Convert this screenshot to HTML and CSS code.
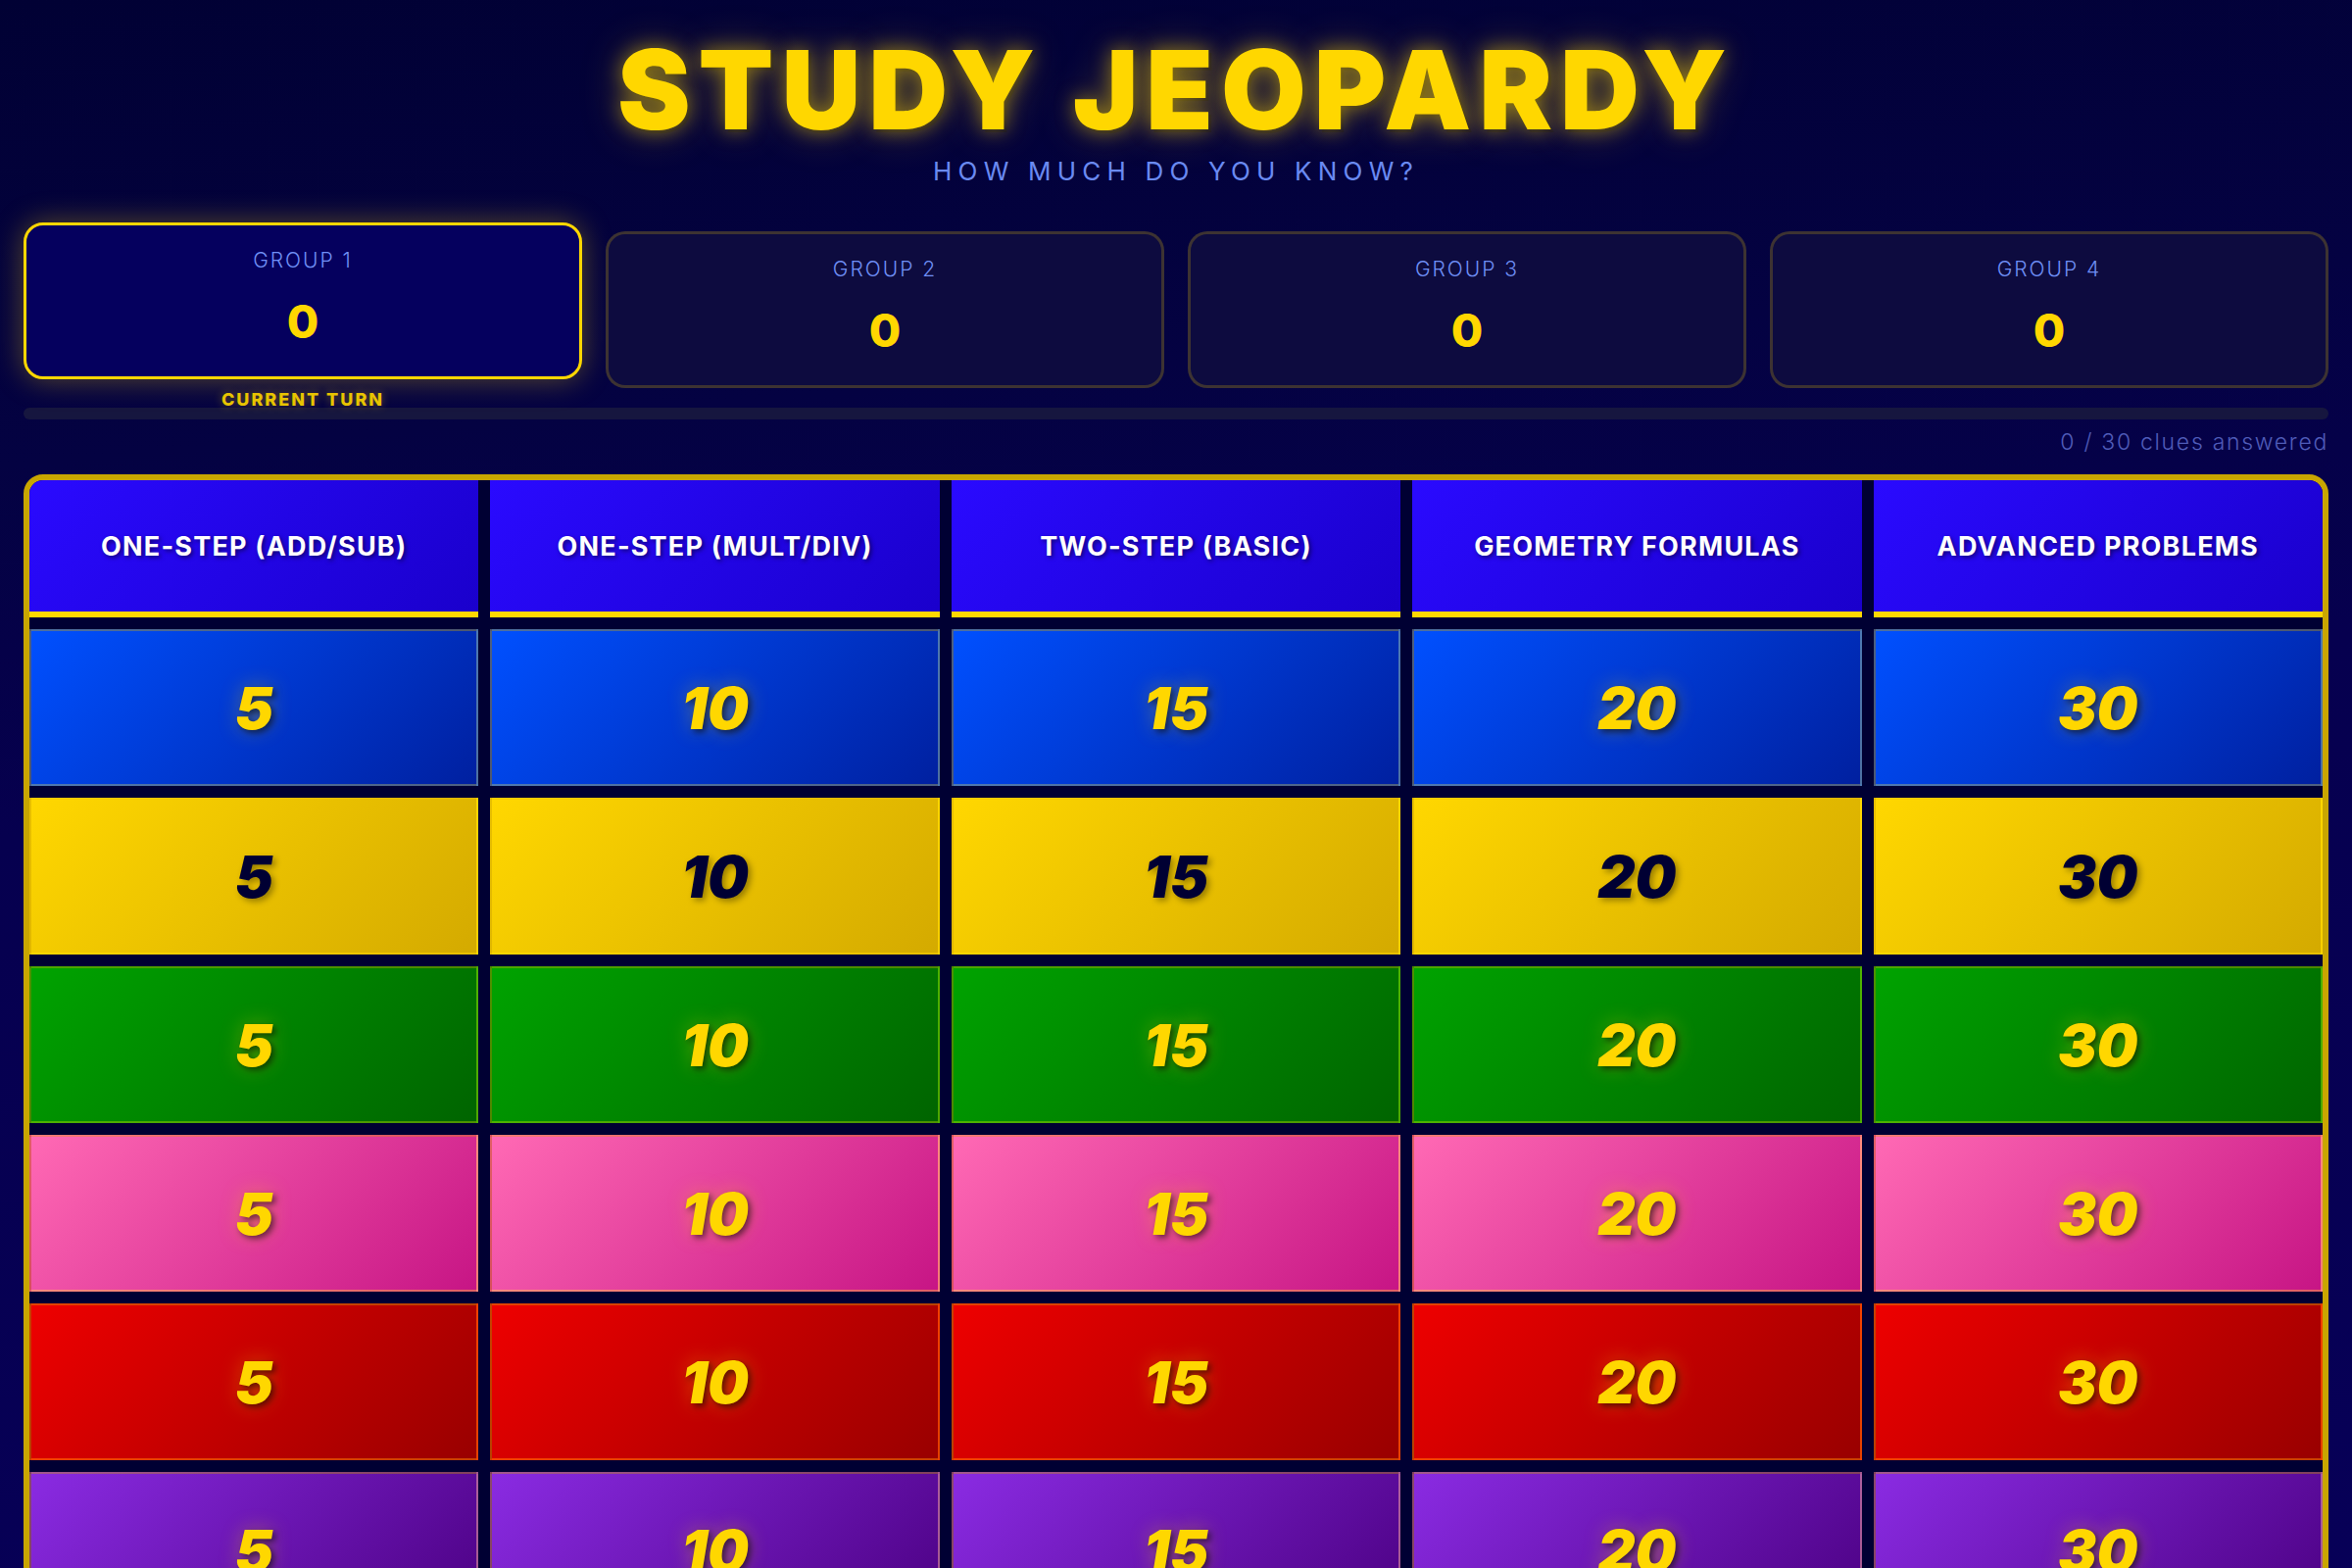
FILE: index.html
```html
<!DOCTYPE html>
<html lang="en">
<head>
<meta charset="utf-8">
<title>Study Jeopardy</title>
<link rel="stylesheet" href="styles.css">
</head>
<body>
<div class="app">
  <header class="hero">
    <h1 class="title">STUDY JEOPARDY</h1>
    <p class="subtitle">HOW MUCH DO YOU KNOW?</p>
  </header>

  <section class="teams">
    <div class="team active">
      <div class="team-name">GROUP 1</div>
      <div class="team-score">0</div>
      <div class="turn">CURRENT TURN</div>
    </div>
    <div class="team">
      <div class="team-name">GROUP 2</div>
      <div class="team-score">0</div>
    </div>
    <div class="team">
      <div class="team-name">GROUP 3</div>
      <div class="team-score">0</div>
    </div>
    <div class="team">
      <div class="team-name">GROUP 4</div>
      <div class="team-score">0</div>
    </div>
  </section>

  <div class="progress"><div class="progress-fill" style="width:0%"></div></div>
  <div class="count">0 / 30 clues answered</div>

  <section class="board">
    <div class="cat">ONE-STEP (ADD/SUB)</div>
    <div class="cat">ONE-STEP (MULT/DIV)</div>
    <div class="cat">TWO-STEP (BASIC)</div>
    <div class="cat">GEOMETRY FORMULAS</div>
    <div class="cat">ADVANCED PROBLEMS</div>

    <div class="clue blue"><span>5</span></div>
    <div class="clue blue"><span>10</span></div>
    <div class="clue blue"><span>15</span></div>
    <div class="clue blue"><span>20</span></div>
    <div class="clue blue"><span>30</span></div>

    <div class="clue yellow"><span>5</span></div>
    <div class="clue yellow"><span>10</span></div>
    <div class="clue yellow"><span>15</span></div>
    <div class="clue yellow"><span>20</span></div>
    <div class="clue yellow"><span>30</span></div>

    <div class="clue green"><span>5</span></div>
    <div class="clue green"><span>10</span></div>
    <div class="clue green"><span>15</span></div>
    <div class="clue green"><span>20</span></div>
    <div class="clue green"><span>30</span></div>

    <div class="clue pink"><span>5</span></div>
    <div class="clue pink"><span>10</span></div>
    <div class="clue pink"><span>15</span></div>
    <div class="clue pink"><span>20</span></div>
    <div class="clue pink"><span>30</span></div>

    <div class="clue red"><span>5</span></div>
    <div class="clue red"><span>10</span></div>
    <div class="clue red"><span>15</span></div>
    <div class="clue red"><span>20</span></div>
    <div class="clue red"><span>30</span></div>

    <div class="clue purple"><span>5</span></div>
    <div class="clue purple"><span>10</span></div>
    <div class="clue purple"><span>15</span></div>
    <div class="clue purple"><span>20</span></div>
    <div class="clue purple"><span>30</span></div>
  </section>
</div>
</body>
</html>
```
FILE: styles.css
```css
* { box-sizing: border-box; }

html, body {
  margin: 0;
  padding: 0;
}

body {
  min-height: 100vh;
  background: linear-gradient(175deg, #010134 0%, #040242 25%, #06004f 45%, #070058 100%);
  font-family: Inter, "Noto Sans", "Liberation Sans", sans-serif;
  color: #ffffff;
}

.app {
  padding: 0 24px 24px;
}

.hero {
  text-align: center;
  padding-top: 35px;
}

.title {
  margin: 0;
  font-size: 112px;
  line-height: 1;
  font-weight: 900;
  letter-spacing: 8px;
  color: #ffd700;
  text-shadow: 0 0 20px rgba(255, 215, 0, 0.5), 0 0 45px rgba(255, 215, 0, 0.3), 3px 3px 0 rgba(0, 0, 0, 0.25);
}

.subtitle {
  margin: 12px 0 0;
  font-size: 26px;
  line-height: 1.2;
  font-weight: 400;
  letter-spacing: 6.2px;
  color: #6a8af2;
}

.teams {
  margin-top: 46px;
  display: grid;
  grid-template-columns: repeat(4, 1fr);
  gap: 24px;
  align-items: start;
}

.team {
  position: relative;
  border: 3px solid rgba(255, 215, 0, 0.2);
  border-radius: 20px;
  background: #0d0b3f;
  padding: 21px 20px 28px;
  text-align: center;
}

.team.active {
  border-color: #ffd700;
  background: #05005e;
  transform: translateY(-9px);
  box-shadow: 0 0 30px rgba(255, 215, 0, 0.35);
}

.team-name {
  font-size: 21px;
  line-height: 30px;
  font-weight: 300;
  letter-spacing: 2px;
  color: #6f8ff5;
}

.team-score {
  margin-top: 19px;
  font-size: 47px;
  line-height: 56px;
  font-weight: 800;
  color: #ffd700;
}

.turn {
  position: absolute;
  left: 0;
  right: 0;
  top: 100%;
  margin-top: 13px;
  font-size: 18px;
  line-height: 1.2;
  font-weight: 800;
  letter-spacing: 2px;
  color: #e8c400;
  text-shadow: 0 0 10px rgba(255, 215, 0, 0.4);
}

.progress {
  margin-top: 20px;
  height: 12px;
  border-radius: 6px;
  background: #16163f;
  overflow: hidden;
}

.progress-fill {
  height: 100%;
  background: #ffd700;
}

.count {
  margin-top: 10px;
  text-align: right;
  font-size: 23px;
  line-height: 26px;
  font-weight: 300;
  letter-spacing: 1.7px;
  color: #4f5bb8;
}

.board {
  margin-top: 20px;
  display: grid;
  grid-template-columns: repeat(5, 1fr);
  gap: 12px;
  background: #000033;
  border: 6px solid #c9a600;
  border-radius: 20px;
  overflow: hidden;
}

.cat {
  height: 140px;
  display: flex;
  align-items: center;
  justify-content: center;
  padding: 0 12px;
  background: linear-gradient(135deg, #2a0aff 0%, #1a00cc 100%);
  border-bottom: 6px solid #ffd700;
  font-size: 27px;
  font-weight: 700;
  letter-spacing: 1.2px;
  color: #ffffff;
  text-align: center;
  text-shadow: 2px 2px 4px rgba(0, 0, 0, 0.5);
}

.clue {
  height: 160px;
  display: flex;
  align-items: center;
  justify-content: center;
  border: 2px solid rgba(255, 215, 0, 0.3);
}

.clue span {
  font-size: 59px;
  font-weight: 900;
  font-style: italic;
  color: #ffd700;
  text-shadow: 3px 3px 6px rgba(0, 0, 0, 0.55), 0 0 20px rgba(255, 215, 0, 0.35);
}

.blue { background: linear-gradient(135deg, #0050ff 0%, #0020a0 100%); }
.yellow { background: linear-gradient(135deg, #ffd700 0%, #d4aa00 100%); }
.green { background: linear-gradient(135deg, #00a300 0%, #006400 100%); }
.pink { background: linear-gradient(135deg, #ff69b4 0%, #c71585 100%); }
.red { background: linear-gradient(135deg, #ee0000 0%, #990000 100%); }
.purple { background: linear-gradient(135deg, #8a2be2 0%, #4b0082 100%); }

.yellow span {
  color: #000033;
  text-shadow: 3px 3px 6px rgba(0, 0, 0, 0.35);
}
```
